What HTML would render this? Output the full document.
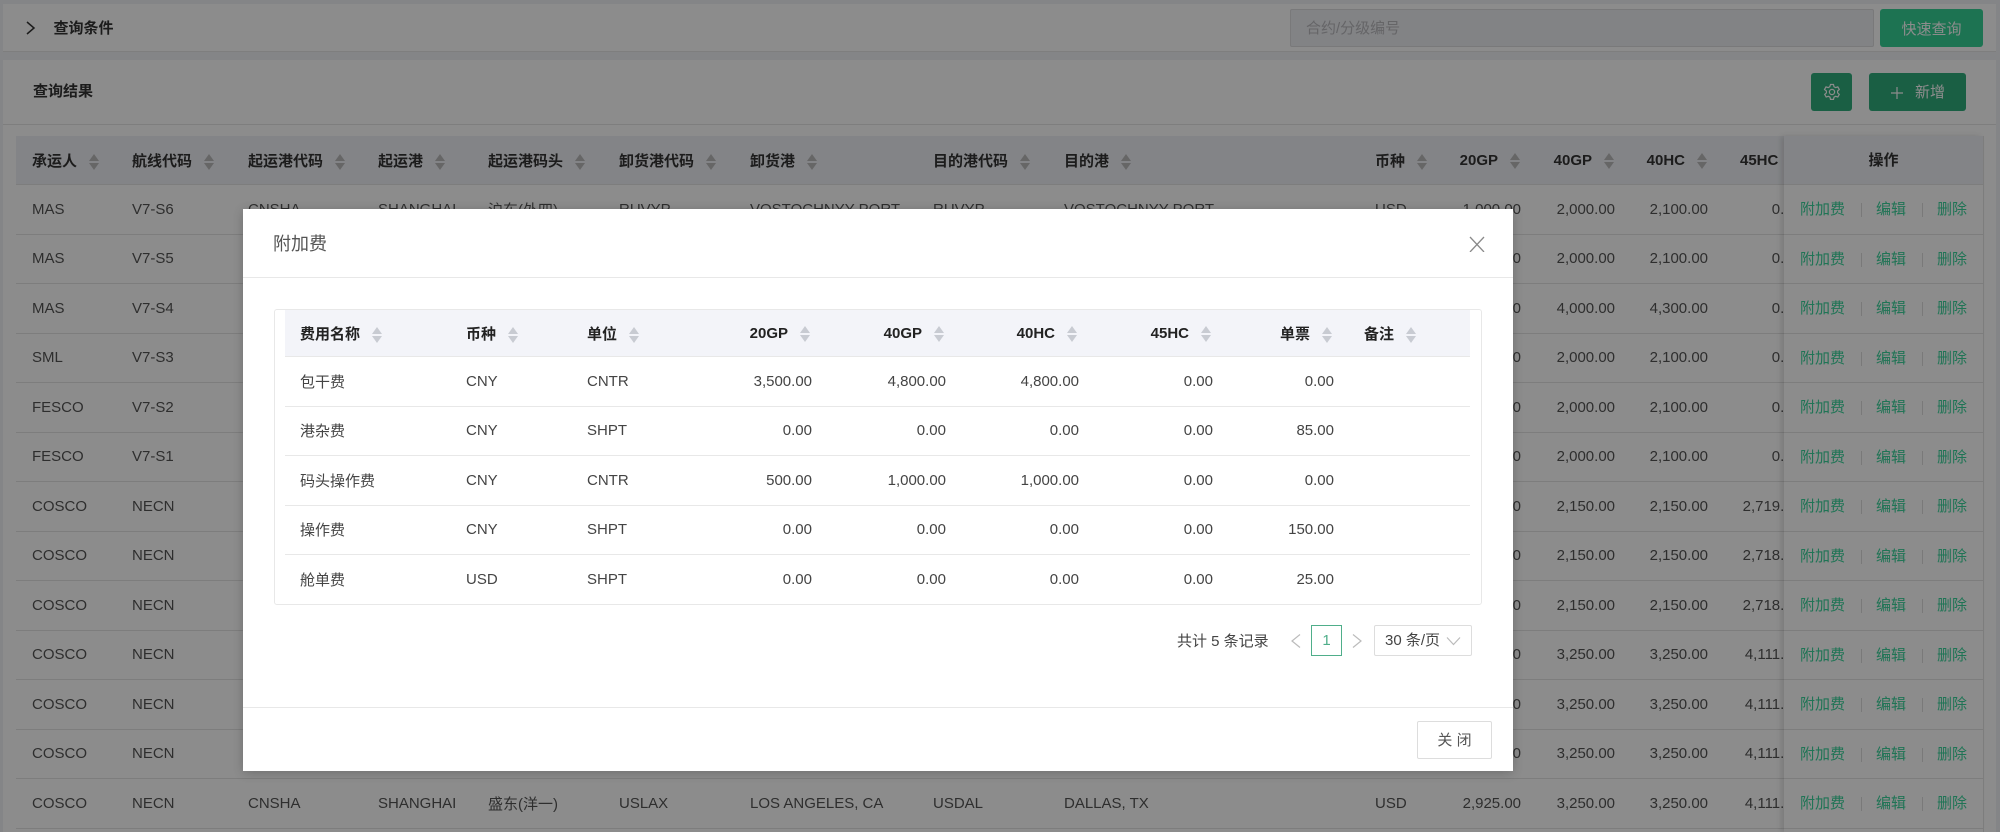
<!DOCTYPE html>
<html lang="zh-CN"><head><meta charset="utf-8"><title>附加费</title>
<style>
*{box-sizing:border-box}
html,body{margin:0;padding:0}
body{width:2000px;height:832px;overflow:hidden;position:relative;background:#f0f2f6;font-family:"Liberation Sans","Noto Sans CJK SC",sans-serif;font-size:15px;color:#555}
.abs{position:absolute}
.panel{position:absolute;background:#fff;left:3px;width:1993px}
.btn{position:absolute;border-radius:3px;color:#fff;text-align:center}
.tw{position:absolute;left:16px;top:136px;width:1768px;height:696px;overflow:hidden}
table{border-collapse:separate;border-spacing:0;table-layout:fixed}
.bg{width:1802px}
.bg th{height:49px;background:#eff1f6;font-weight:bold;color:#333;text-align:left;padding:0 0 0 16px;border-bottom:1px solid #e4e4e4;white-space:nowrap}
.bg td{height:49.5px;padding:0 0 0 16px;border-bottom:1px solid #e4e4e4;white-space:nowrap;overflow:hidden;background:#fff}
.bg td.n{text-align:right;padding:0 17px 0 0}
.bg th.n{text-align:right;padding:0 18px 0 0}
.s{display:inline-block;position:relative;width:10px;height:16px;margin-left:12px;vertical-align:-4px}
.s:before,.s:after{content:"";position:absolute;left:0;border-left:5px solid transparent;border-right:5px solid transparent}
.s:before{top:0;border-bottom:7px solid #bbb}
.s:after{bottom:0;border-top:7px solid #bbb}
.fx{position:absolute;left:1784px;top:136px;width:199px;height:696px;background:#fff;box-shadow:-3px 0 5px rgba(0,0,0,.12)}
.fx .h{height:49px;background:#eff1f6;text-align:center;font-weight:bold;color:#333;line-height:50px;border-bottom:1px solid #e4e4e4}
.fx .r{position:relative;height:49.5px;border-bottom:1px solid #e4e4e4;color:#3ad39b;line-height:49px}
.fx .r span{position:absolute;top:0}
.fx .r i{position:absolute;top:18px;width:1px;height:14px;background:#ddd}
.overlay{position:absolute;left:0;top:0;width:2000px;height:832px;background:rgba(0,0,0,.45)}
.modal{position:absolute;left:243px;top:208.5px;width:1270px;height:562.5px;background:#fff;box-shadow:0 2px 10px rgba(0,0,0,.2)}
.mt{position:absolute;left:42px;top:101.5px;width:1185px}
.mt th{height:47px;background:#f3f4f9;color:#222;font-weight:bold;text-align:left;padding:0 0 0 15px;border-bottom:1px solid #e8e8e8;white-space:nowrap}
.mt td{height:49.5px;padding:0 0 0 15px;color:#444;border-bottom:1px solid #e8e8e8;white-space:nowrap}
.mt tr:last-child td{border-bottom:0}
.mt td.n{text-align:right;padding:0 14px 0 0}
.mt th.n{text-align:right;padding:0 16px 0 0}
.mt .s:before{border-bottom-color:#c8cbd2}
.mt .s:after{border-top-color:#c8cbd2}
</style></head><body>

<div class="panel" style="top:4px;height:48px;border-bottom:1px solid #e6e6e6"></div>
<svg class="abs" style="left:25px;top:20px" width="12" height="16" viewBox="0 0 12 16"><path d="M2 2l7 6-7 6" fill="none" stroke="#333" stroke-width="1.5"/></svg>
<div class="abs" style="left:53.500px;top:18px;font-weight:bold;color:#333;line-height:22px">查询条件</div>
<div class="abs" style="left:1290px;top:9px;width:584px;height:38px;background:#edeef3;border:1px solid #dcdcdf;border-radius:2px;padding-left:15px;line-height:37px;color:#b8b8bc">合约/分级编号</div>
<div class="btn" style="left:1880px;top:9px;width:103px;height:38px;background:#36d296;line-height:41px">快速查询</div>

<div class="panel" style="top:60px;height:772px"></div>
<div class="abs" style="left:3px;top:124px;width:1993px;height:1px;background:#e6e6e6"></div>
<div class="abs" style="left:33px;top:81px;font-weight:bold;color:#333;line-height:22px">查询结果</div>
<div class="btn" style="left:1811px;top:73px;width:41px;height:38px;background:#31ad7d">
<svg style="margin-top:10px" width="18" height="18" viewBox="0 0 18 18" fill="none" stroke="#fff" stroke-width="1.2"><path d="M7.5 1.5h3l.5 2.200 1.600.9 2.200-.7 1.500 2.600-1.700 1.500v1.900l1.700 1.500-1.500 2.600-2.200-.7-1.600.9-.5 2.200h-3l-.5-2.200-1.600-.9-2.200.7-1.500-2.600 1.700-1.500V8L1.500 6.500 3 3.900l2.200.7 1.600-.9z"/><circle cx="9" cy="9" r="2.600"/></svg></div>
<div class="btn" style="left:1869px;top:73px;width:97px;height:38px;background:#31ad7d;line-height:40px;padding-left:46px;text-align:left">新增</div>
<svg class="abs" style="left:1890px;top:86px" width="14" height="14" viewBox="0 0 14 14"><path d="M7 1v12M1 7h12" stroke="#fff" stroke-width="1.200"/></svg>

<div class="tw">
<table class="bg">
<colgroup><col style="width:100px"><col style="width:116px"><col style="width:130px"><col style="width:110px"><col style="width:131px"><col style="width:131px"><col style="width:183px"><col style="width:131px"><col style="width:311px"><col style="width:86px"><col style="width:93px"><col style="width:94px"><col style="width:93px"><col style="width:93px"></colgroup>
<tr><th>承运人<span class="s"></span></th><th>航线代码<span class="s"></span></th><th>起运港代码<span class="s"></span></th><th>起运港<span class="s"></span></th><th>起运港码头<span class="s"></span></th><th>卸货港代码<span class="s"></span></th><th>卸货港<span class="s"></span></th><th>目的港代码<span class="s"></span></th><th>目的港<span class="s"></span></th><th>币种<span class="s"></span></th><th class="n">20GP<span class="s"></span></th><th class="n">40GP<span class="s"></span></th><th class="n">40HC<span class="s"></span></th><th style="padding-left:15px">45HC</th></tr>
<tr><td>MAS</td><td>V7-S6</td><td>CNSHA</td><td>SHANGHAI</td><td>沪东(外四)</td><td>RUVYP</td><td>VOSTOCHNYY PORT</td><td>RUVYP</td><td>VOSTOCHNYY PORT</td><td>USD</td><td class="n">1,000.00</td><td class="n">2,000.00</td><td class="n">2,100.00</td><td class="n">0.00</td></tr>
<tr><td>MAS</td><td>V7-S5</td><td></td><td></td><td></td><td></td><td></td><td></td><td></td><td></td><td class="n">1,000.00</td><td class="n">2,000.00</td><td class="n">2,100.00</td><td class="n">0.00</td></tr>
<tr><td>MAS</td><td>V7-S4</td><td></td><td></td><td></td><td></td><td></td><td></td><td></td><td></td><td class="n">3,000.00</td><td class="n">4,000.00</td><td class="n">4,300.00</td><td class="n">0.00</td></tr>
<tr><td>SML</td><td>V7-S3</td><td></td><td></td><td></td><td></td><td></td><td></td><td></td><td></td><td class="n">1,000.00</td><td class="n">2,000.00</td><td class="n">2,100.00</td><td class="n">0.00</td></tr>
<tr><td>FESCO</td><td>V7-S2</td><td></td><td></td><td></td><td></td><td></td><td></td><td></td><td></td><td class="n">1,000.00</td><td class="n">2,000.00</td><td class="n">2,100.00</td><td class="n">0.00</td></tr>
<tr><td>FESCO</td><td>V7-S1</td><td></td><td></td><td></td><td></td><td></td><td></td><td></td><td></td><td class="n">1,000.00</td><td class="n">2,000.00</td><td class="n">2,100.00</td><td class="n">0.00</td></tr>
<tr><td>COSCO</td><td>NECN</td><td></td><td></td><td></td><td></td><td></td><td></td><td></td><td></td><td class="n">1,900.00</td><td class="n">2,150.00</td><td class="n">2,150.00</td><td class="n">2,719.00</td></tr>
<tr><td>COSCO</td><td>NECN</td><td></td><td></td><td></td><td></td><td></td><td></td><td></td><td></td><td class="n">1,900.00</td><td class="n">2,150.00</td><td class="n">2,150.00</td><td class="n">2,718.00</td></tr>
<tr><td>COSCO</td><td>NECN</td><td></td><td></td><td></td><td></td><td></td><td></td><td></td><td></td><td class="n">1,900.00</td><td class="n">2,150.00</td><td class="n">2,150.00</td><td class="n">2,718.00</td></tr>
<tr><td>COSCO</td><td>NECN</td><td></td><td></td><td></td><td></td><td></td><td></td><td></td><td></td><td class="n">2,925.00</td><td class="n">3,250.00</td><td class="n">3,250.00</td><td class="n">4,111.00</td></tr>
<tr><td>COSCO</td><td>NECN</td><td></td><td></td><td></td><td></td><td></td><td></td><td></td><td></td><td class="n">2,925.00</td><td class="n">3,250.00</td><td class="n">3,250.00</td><td class="n">4,111.00</td></tr>
<tr><td>COSCO</td><td>NECN</td><td></td><td></td><td></td><td></td><td></td><td></td><td></td><td></td><td class="n">2,925.00</td><td class="n">3,250.00</td><td class="n">3,250.00</td><td class="n">4,111.00</td></tr>
<tr><td>COSCO</td><td>NECN</td><td>CNSHA</td><td>SHANGHAI</td><td>盛东(洋一)</td><td>USLAX</td><td>LOS ANGELES, CA</td><td>USDAL</td><td>DALLAS, TX</td><td>USD</td><td class="n">2,925.00</td><td class="n">3,250.00</td><td class="n">3,250.00</td><td class="n">4,111.00</td></tr>
</table>
</div>

<div class="fx">
<div class="h">操作</div>
<div class="r"><span style="left:16px">附加费</span><i style="left:77px"></i><span style="left:92px">编辑</span><i style="left:138px"></i><span style="left:153px">删除</span></div>
<div class="r"><span style="left:16px">附加费</span><i style="left:77px"></i><span style="left:92px">编辑</span><i style="left:138px"></i><span style="left:153px">删除</span></div>
<div class="r"><span style="left:16px">附加费</span><i style="left:77px"></i><span style="left:92px">编辑</span><i style="left:138px"></i><span style="left:153px">删除</span></div>
<div class="r"><span style="left:16px">附加费</span><i style="left:77px"></i><span style="left:92px">编辑</span><i style="left:138px"></i><span style="left:153px">删除</span></div>
<div class="r"><span style="left:16px">附加费</span><i style="left:77px"></i><span style="left:92px">编辑</span><i style="left:138px"></i><span style="left:153px">删除</span></div>
<div class="r"><span style="left:16px">附加费</span><i style="left:77px"></i><span style="left:92px">编辑</span><i style="left:138px"></i><span style="left:153px">删除</span></div>
<div class="r"><span style="left:16px">附加费</span><i style="left:77px"></i><span style="left:92px">编辑</span><i style="left:138px"></i><span style="left:153px">删除</span></div>
<div class="r"><span style="left:16px">附加费</span><i style="left:77px"></i><span style="left:92px">编辑</span><i style="left:138px"></i><span style="left:153px">删除</span></div>
<div class="r"><span style="left:16px">附加费</span><i style="left:77px"></i><span style="left:92px">编辑</span><i style="left:138px"></i><span style="left:153px">删除</span></div>
<div class="r"><span style="left:16px">附加费</span><i style="left:77px"></i><span style="left:92px">编辑</span><i style="left:138px"></i><span style="left:153px">删除</span></div>
<div class="r"><span style="left:16px">附加费</span><i style="left:77px"></i><span style="left:92px">编辑</span><i style="left:138px"></i><span style="left:153px">删除</span></div>
<div class="r"><span style="left:16px">附加费</span><i style="left:77px"></i><span style="left:92px">编辑</span><i style="left:138px"></i><span style="left:153px">删除</span></div>
<div class="r"><span style="left:16px">附加费</span><i style="left:77px"></i><span style="left:92px">编辑</span><i style="left:138px"></i><span style="left:153px">删除</span></div>
</div>
<div class="abs" style="left:1983px;top:136px;width:1px;height:696px;background:#e4e4e4"></div>

<div class="overlay"></div>

<div class="modal">
<div class="abs" style="left:30px;top:22px;font-size:18px;line-height:26px;color:#555">附加费</div>
<svg class="abs" style="left:1226px;top:27px" width="16" height="16" viewBox="0 0 16 16"><path d="M1 1l14 15M15 1L1 16" stroke="#8a8a8a" stroke-width="1.300" fill="none"/></svg>
<div class="abs" style="left:0;top:68px;width:1270px;height:1px;background:#e8e8e8"></div>

<div class="abs" style="left:30.500px;top:100.500px;width:1208px;height:296px;border:1px solid #e8e8e8;border-radius:3px"></div>
<table class="mt">
<colgroup><col style="width:166px"><col style="width:121px"><col style="width:120px"><col style="width:134px"><col style="width:134px"><col style="width:133px"><col style="width:134px"><col style="width:121px"><col style="width:122px"></colgroup>
<tr><th>费用名称<span class="s"></span></th><th>币种<span class="s"></span></th><th>单位<span class="s"></span></th><th class="n">20GP<span class="s"></span></th><th class="n">40GP<span class="s"></span></th><th class="n">40HC<span class="s"></span></th><th class="n">45HC<span class="s"></span></th><th class="n">单票<span class="s"></span></th><th style="padding-left:16px">备注<span class="s"></span></th></tr>
<tr><td>包干费</td><td>CNY</td><td>CNTR</td><td class="n">3,500.00</td><td class="n">4,800.00</td><td class="n">4,800.00</td><td class="n">0.00</td><td class="n">0.00</td><td></td></tr>
<tr><td>港杂费</td><td>CNY</td><td>SHPT</td><td class="n">0.00</td><td class="n">0.00</td><td class="n">0.00</td><td class="n">0.00</td><td class="n">85.00</td><td></td></tr>
<tr><td>码头操作费</td><td>CNY</td><td>CNTR</td><td class="n">500.00</td><td class="n">1,000.00</td><td class="n">1,000.00</td><td class="n">0.00</td><td class="n">0.00</td><td></td></tr>
<tr><td>操作费</td><td>CNY</td><td>SHPT</td><td class="n">0.00</td><td class="n">0.00</td><td class="n">0.00</td><td class="n">0.00</td><td class="n">150.00</td><td></td></tr>
<tr><td>舱单费</td><td>USD</td><td>SHPT</td><td class="n">0.00</td><td class="n">0.00</td><td class="n">0.00</td><td class="n">0.00</td><td class="n">25.00</td><td></td></tr>
</table>

<div class="abs" style="left:934px;top:422px;line-height:21px;color:#444;white-space:nowrap">共计 5 条记录</div>
<svg class="abs" style="left:1047px;top:424px" width="12" height="16" viewBox="0 0 12 16"><path d="M10 1.500L2 8l8 6.500" fill="none" stroke="#bbb" stroke-width="1.200"/></svg>
<div class="abs" style="left:1068px;top:416.500px;width:31px;height:31px;border:1px solid #4fae8a;color:#4fae8a;text-align:center;line-height:30px">1</div>
<svg class="abs" style="left:1108px;top:424px" width="12" height="16" viewBox="0 0 12 16"><path d="M2 1.500L10 8l-8 6.500" fill="none" stroke="#bbb" stroke-width="1.200"/></svg>
<div class="abs" style="left:1131px;top:416.500px;width:98px;height:31px;border:1px solid #ddd;border-radius:2px;padding-left:10px;line-height:30px;color:#444;white-space:nowrap">30 条/页</div>
<svg class="abs" style="left:1203px;top:427px" width="15" height="10" viewBox="0 0 15 10"><path d="M1 1.500l6.500 7 6.500-7" fill="none" stroke="#bbb" stroke-width="1.200"/></svg>

<div class="abs" style="left:0;top:498px;width:1270px;height:1px;background:#e8e8e8"></div>
<div class="abs" style="left:1174px;top:512.500px;width:75px;height:38px;border:1px solid #ddd;border-radius:2px;text-align:center;line-height:38px;color:#555">关 闭</div>
</div>
</body></html>
